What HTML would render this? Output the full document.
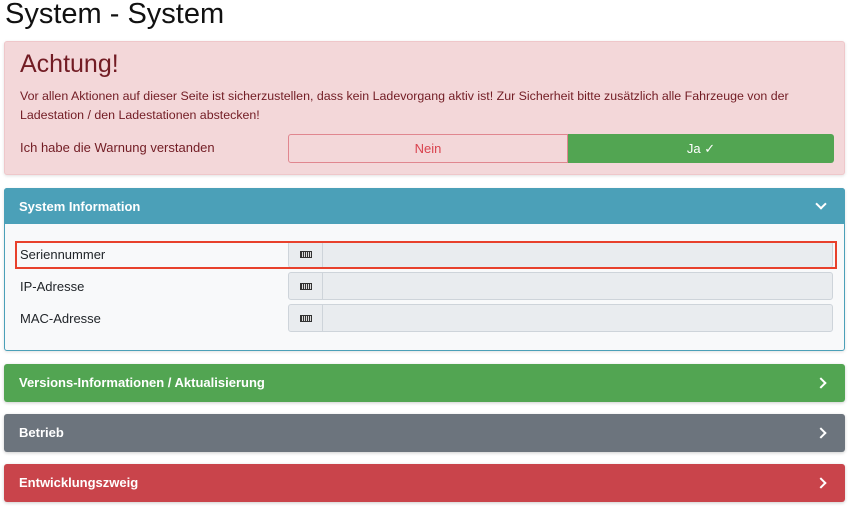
<!DOCTYPE html>
<html><head><meta charset="utf-8"><style>
*{box-sizing:border-box;margin:0;padding:0}
body{width:850px;height:507px;overflow:hidden;background:#fff;font-family:"Liberation Sans",sans-serif;font-size:13px;color:#212529;position:relative}
.abs{position:absolute}
h1{position:absolute;left:5px;top:-2px;font-size:29px;font-weight:400;color:#111}
.alert{left:4px;top:41px;width:841px;height:134px;background:#f3d7d9;border:1px solid #efc7ca;border-radius:3px;color:#721c24;box-shadow:0 1px 3px rgba(0,0,0,.12)}
.bar{left:4px;width:841px;height:38px;border-radius:3px;color:#fff;font-weight:700;font-size:13px;padding:11px 0 0 15px;box-shadow:0 1px 3px rgba(0,0,0,.2)}
.chev{position:absolute;right:20px;top:15px;width:8px;height:8px;border-right:2px solid #fff;border-top:2px solid #fff;transform:rotate(45deg)}
.inp{left:288px;width:545px;height:28px;background:#e9ecef;border:1px solid #ced4da;border-radius:3px}
.addon{position:absolute;left:0;top:0;width:34px;height:100%;border-right:1px solid #ced4da;display:flex;align-items:center;justify-content:center}
.kb{width:12px;height:7px;border:1px solid #333;background:repeating-linear-gradient(90deg,#333 0 1px,#ddd 1px 2px);}
.lbl{left:20px;font-size:13px}
</style></head><body>
<h1>System - System</h1>
<div class="abs alert">
<div class="abs" style="left:15px;top:8px;font-size:25px;color:#721c24">Achtung!</div>
<div class="abs" style="left:15px;top:45px;line-height:19px;width:790px;font-size:12.4px">Vor allen Aktionen auf dieser Seite ist sicherzustellen, dass kein Ladevorgang aktiv ist! Zur Sicherheit bitte zusätzlich alle Fahrzeuge von der Ladestation / den Ladestationen abstecken!</div>
<div class="abs" style="left:15px;top:98px">Ich habe die Warnung verstanden</div>
<div class="abs" style="left:283px;top:92px;width:280px;height:29px;border:1px solid #e0868f;border-radius:3px 0 0 3px;color:#d9434f;text-align:center;line-height:27px">Nein</div>
<div class="abs" style="left:563px;top:92px;width:266px;height:29px;background:#52a552;border-radius:0 3px 3px 0;color:#fff;text-align:center;line-height:29px">Ja ✓</div>
</div>
<div class="abs" style="left:4px;top:188px;width:841px;height:163px;background:#f8f9fa;border:1px solid #4ba0b8;border-radius:3px;box-shadow:0 1px 3px rgba(0,0,0,.12)"></div>
<div class="abs bar" style="top:188px;height:36px;background:#4ba0b8;border-radius:3px 3px 0 0;box-shadow:none;padding-top:11px">System Information<div class="chev" style="transform:rotate(135deg);top:12px"></div></div>
<div class="abs lbl" style="top:247px">Seriennummer</div>
<div class="abs inp" style="top:241px;height:27px"><div class="addon"><div class="kb"></div></div></div>
<div class="abs" style="left:15px;top:241px;width:822px;height:28px;border:2px solid #e8412c"></div>
<div class="abs lbl" style="top:279px">IP-Adresse</div>
<div class="abs inp" style="top:272px"><div class="addon"><div class="kb"></div></div></div>
<div class="abs lbl" style="top:311px">MAC-Adresse</div>
<div class="abs inp" style="top:304px"><div class="addon"><div class="kb"></div></div></div>
<div class="abs bar" style="top:364px;background:#52a552">Versions-Informationen / Aktualisierung<div class="chev"></div></div>
<div class="abs bar" style="top:414px;background:#6c747d">Betrieb<div class="chev"></div></div>
<div class="abs bar" style="top:464px;background:#c9444b">Entwicklungszweig<div class="chev"></div></div>
</body></html>
